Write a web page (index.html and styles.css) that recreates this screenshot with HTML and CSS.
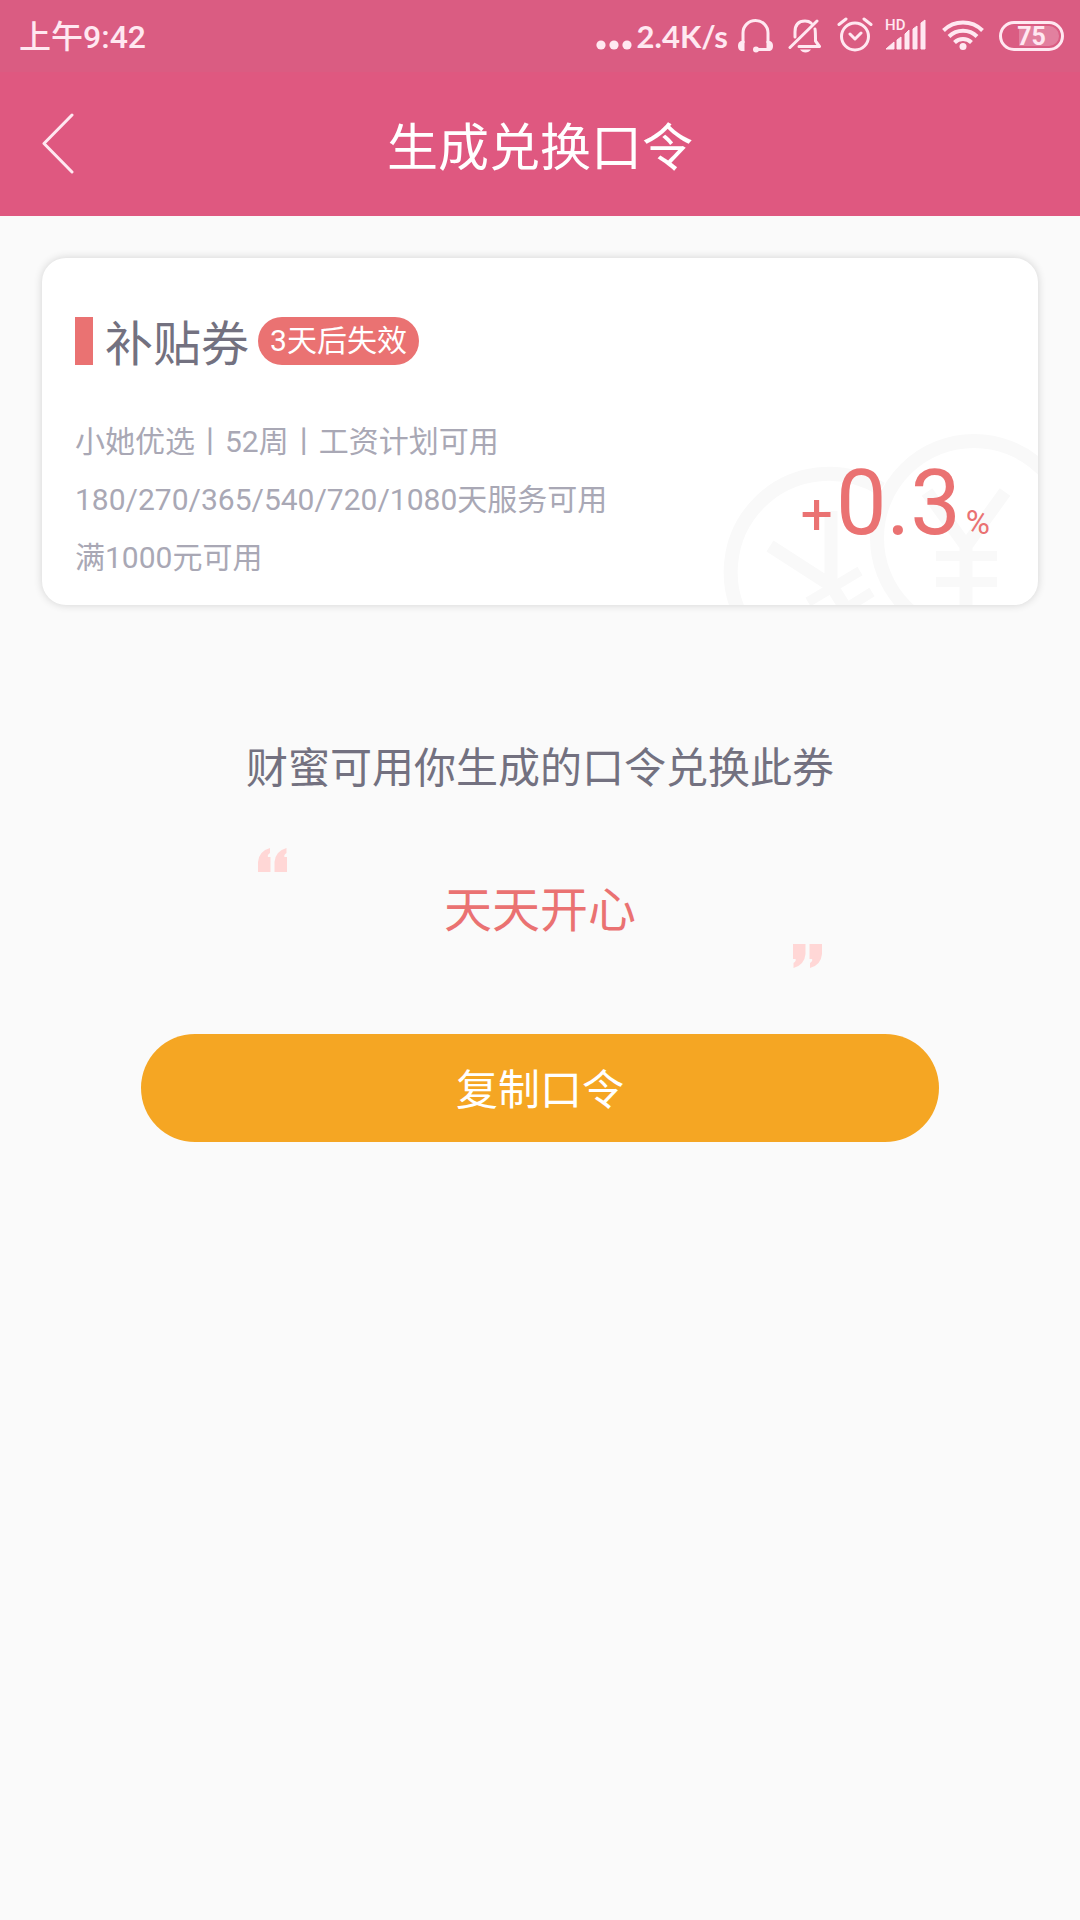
FILE: index.html
```html
<!DOCTYPE html>
<html lang="zh-CN">
<head>
<meta charset="utf-8">
<meta name="viewport" content="width=device-width, initial-scale=1">
<title>生成兑换口令</title>
<link rel="stylesheet" href="styles.css">
</head>
<body>
<div class="status-bar">
  <time class="clock">上午9:42</time>
  <div class="indicators">
    <svg class="dots" width="36" height="50" viewBox="0 0 36 50" fill="currentColor" aria-hidden="true"><circle cx="5" cy="34" r="4.600"/><circle cx="18" cy="34" r="4.600"/><circle cx="31" cy="34" r="4.600"/></svg>
    <span class="speed">2.4K/s</span>
    <svg class="headset" width="36" height="50" viewBox="0 -2 36 50" fill="none" stroke="currentColor" stroke-width="3" aria-hidden="true"><path d="M6 30V20a12.500 12.500 0 0 1 25 0V30M19 36.500H31"/><g fill="currentColor" stroke="none"><path d="M7.500 28v10H4q-3-1-3-5t3-5zM29.500 28v10H33q3-1 3-5t-3-5z"/><circle cx="19" cy="36.500" r="3"/></g></svg>
    <svg class="bell" width="34" height="50" viewBox="0 -1 34 50" fill="none" stroke="currentColor" stroke-width="3" stroke-linecap="round" stroke-linejoin="round" aria-hidden="true"><path d="M2 35.500 29 9M7 25V20Q7 9 17 9q4 0 6 2M27 17q.5 2 .5 12l4 5.500H11"/><path d="M12 37.500h11q-2 3-5.500 3t-5.500-3" fill="currentColor" stroke="none"/></svg>
    <svg class="alarm" width="36" height="50" viewBox="0 0 36 50" fill="none" stroke="currentColor" stroke-width="3" stroke-linecap="round" stroke-linejoin="round" aria-hidden="true"><circle cx="18" cy="25.500" r="13.500"/><path d="m13 23 5 5 6-6M2 13.500l7-5.500M34 13.500 27 8"/></svg>
    <svg class="signal" width="42" height="50" viewBox="0 -1 42 50" fill="currentColor" aria-hidden="true"><text class="hd" x="0" y="18">HD</text><path d="M1 37 9 30v7zM12 28l4-3v12h-4zM20 22l4-4v19h-4zM28 17l4-3v23h-4zM36 11l4-3v29h-4z" stroke="currentColor"/></svg>
    <svg class="wifi" width="42" height="50" viewBox="0 0 42 50" fill="none" stroke="currentColor" stroke-width="4" aria-hidden="true"><path d="M1.500 19.500a28 28 0 0 1 39 0M7 25.500a20 20 0 0 1 28 0M12.500 31.500a12 12 0 0 1 17 0"/><circle cx="21" cy="35.500" r="3.500" fill="currentColor" stroke="none"/></svg>
    <span class="battery">75</span>
  </div>
</div>
<header class="nav">
  <button class="back" type="button" aria-label="返回"><svg width="34" height="62" viewBox="0 0 34 62" fill="none" stroke="currentColor" stroke-width="3" stroke-linecap="round" stroke-linejoin="round"><path d="M30 2 2 30.500 30 59"/></svg></button>
  <h1 class="nav-title">生成兑换口令</h1>
</header>
<main class="page">
  <section class="coupon">
    <svg class="coins" width="318" height="175" viewBox="0 0 318 175" fill="none" stroke="currentColor" stroke-width="14" aria-hidden="true">
      <path d="M27 196A98 98 0 0 1 161 59"/>
      <circle cx="254" cy="108" r="97"/>
      <g stroke-width="13"><path d="m50 116 62 40M111 81v74l15 24M207 62l39 54 39-54M246 113v62"/></g>
      <g stroke-width="10"><path d="m88 172 52-31M128 177l24-15M216 126h61M216 152h61"/></g>
    </svg>
    <div class="coupon-head">
      <span class="mark"></span>
      <h2 class="coupon-name">补贴券</h2>
      <span class="tag">3天后失效</span>
    </div>
    <div class="coupon-body">
      <div class="rules">
        <p>小她优选丨52周丨工资计划可用</p>
        <p>180/270/365/540/720/1080天服务可用</p>
        <p>满1000元可用</p>
      </div>
      <p class="rate"><span class="plus">+</span><span class="value">0.3</span><span class="unit">%</span></p>
    </div>
  </section>
  <p class="lead">财蜜可用你生成的口令兑换此券</p>
  <div class="phrase">
    <svg class="quote open" width="29" height="24" viewBox="0 0 29 24" fill="currentColor" aria-hidden="true"><path id="q" d="M0 24V14Q1 3 12 0v5q-3 2-2 4h2.500v15zM16.500 24V14Q17.500 3 28.500 0v5q-3 2-2 4H29v15z"/></svg>
    <p class="words">天天开心</p>
    <svg class="quote close" width="29" height="24" viewBox="0 0 29 24" fill="currentColor" aria-hidden="true"><use href="#q" transform="rotate(180 14.500 12)"/></svg>
  </div>
  <button class="copy" type="button">复制口令</button>
</main>
</body>
</html>
```
FILE: styles.css
```css
* {
  box-sizing: border-box;
}

body,
h1,
h2,
p {
  margin: 0;
  font-weight: 400;
}

body {
  min-height: 100vh;
  background: #fafafa;
  color: #737180;
  font-family: Roboto, "Noto Sans CJK SC", sans-serif;
}

button {
  padding: 0;
  border: 0;
  background: none;
  color: inherit;
  font: inherit;
  cursor: pointer;
}

svg {
  display: block;
}

/* Status bar */
.status-bar {
  display: flex;
  justify-content: space-between;
  align-items: center;
  height: 72px;
  padding: 0 16px 0 19px;
  background: #da5c82;
  color: #ffe8f1;
}

.clock {
  padding-top: 2px;
  font-size: 32px;
  font-weight: 500;
  line-height: 48px;
}

.indicators {
  display: flex;
  align-items: center;
}

.speed {
  margin-left: 5px;
  font-family: Lato, sans-serif;
  font-size: 31px;
  font-weight: 700;
  line-height: 48px;
}

.headset {
  margin-left: 9px;
}

.bell {
  margin-left: 15px;
}

.alarm {
  margin-left: 15px;
}

.signal {
  margin-left: 12px;
}

.hd {
  font-size: 15px;
  font-weight: 500;
}

.wifi {
  margin-left: 15px;
}

.battery {
  width: 65px;
  height: 30px;
  margin-left: 15px;
  padding: 2px;
  border: 3px solid;
  border-radius: 15px;
  background: linear-gradient(90deg, transparent 15px, #e2809f 15px) content-box;
  font-size: 25px;
  font-weight: 700;
  line-height: 21px;
  text-align: center;
}

/* Navigation */
.nav {
  display: grid;
  grid-template-columns: 96px 1fr 96px;
  align-items: center;
  height: 144px;
  background: #df5880;
  color: #fff;
}

.back {
  justify-self: start;
  margin-left: 42px;
  color: #ffe8f1;
}

.nav-title {
  padding-top: 9px;
  font-size: 51px;
  line-height: 72px;
  text-align: center;
}

/* Page */
.page {
  display: flex;
  flex-direction: column;
  padding: 42px 42px 48px;
}

.coupon {
  position: relative;
  overflow: hidden;
  padding: 53px 48px 18px 33px;
  border-radius: 24px;
  background: #fff;
  box-shadow: 0 0 8px rgba(0, 0, 0, 0.16);
}

.coins {
  position: absolute;
  right: 0;
  bottom: 0;
  color: #f9f9f9;
}

.coupon-head {
  display: flex;
  align-items: center;
  height: 60px;
}

.mark {
  width: 18px;
  height: 48px;
  background: #ea7272;
}

.coupon-name {
  margin-left: 12px;
  padding-top: 8px;
  font-size: 48px;
  line-height: 54px;
}

.tag {
  margin-left: 9px;
  padding: 0 12px;
  border-radius: 24px;
  background: #ea7272;
  color: #fff;
  font-size: 30px;
  line-height: 48px;
}

.coupon-body {
  position: relative;
  display: flex;
  justify-content: space-between;
  align-items: center;
  margin-top: 42px;
}

.rules {
  color: #a9a8b5;
  font-size: 30px;
  line-height: 58px;
}

.rate {
  padding-top: 32px;
  color: #ea7272;
  line-height: 96px;
}

.plus {
  font-size: 57px;
}

.value {
  margin-left: 3px;
  font-size: 90px;
}

.unit {
  margin-left: 5px;
  font-size: 33px;
}

.lead {
  margin-top: 134px;
  font-size: 42px;
  line-height: 60px;
  text-align: center;
}

.phrase {
  display: grid;
  width: 564px;
  max-width: 100%;
  margin: 49px auto 0;
}

.quote {
  color: #ffd7d6;
}

.close {
  justify-self: end;
}

.words {
  padding-top: 6px;
  color: #ea7272;
  font-size: 48px;
  line-height: 66px;
  text-align: center;
}

.copy {
  height: 108px;
  margin: 66px 99px 0;
  padding-bottom: 3px;
  border-radius: 54px;
  background: #f5a623;
  color: #fff;
  font-size: 42px;
}
```
